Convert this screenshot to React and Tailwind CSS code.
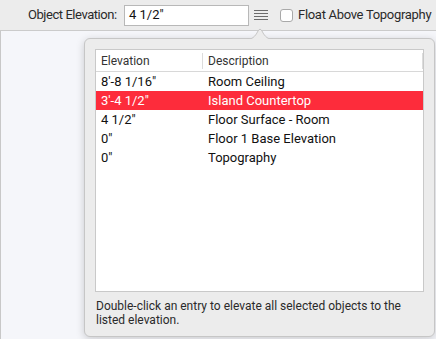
import React from "react";

const rows = [
  { elev: "8'-8 1/16\"", desc: "Room Ceiling" },
  { elev: "3'-4 1/2\"", desc: "Island Countertop", selected: true },
  { elev: "4 1/2\"", desc: "Floor Surface - Room" },
  { elev: "0\"", desc: "Floor 1 Base Elevation" },
  { elev: "0\"", desc: "Topography" },
];

function ListIcon() {
  return (
    <svg width="16" height="12" viewBox="0 0 16 12" className="text-[#6b6b6b]">
      <path d="M1 1.5h14M1 4.5h14M1 7.5h14M1 10.5h14" stroke="currentColor" strokeWidth="1" />
    </svg>
  );
}

export default function App() {
  return (
    <div
      className="relative w-[436px] h-[339px] overflow-hidden bg-[#f5f6fa] text-[13px] text-[#222]"
      style={{ fontFamily: "Roboto, 'Liberation Sans', sans-serif" }}
    >
      <div className="h-[31px] bg-[#ececec] border-b border-[#cbcbcb] flex items-center pl-[28px] whitespace-nowrap">
        <span className="shrink-0 w-[96px] text-[13px] tracking-[-0.45px] text-[#2a2a2a]">Object Elevation:</span>
        <div className="shrink-0 w-[125px] h-[21px] bg-white border border-[#b8b8b8] flex items-center pl-[4px] text-[13px] text-[#111]">
          4 1/2"
        </div>
        <div className="shrink-0 ml-[4px] w-[16px] flex items-center justify-center">
          <ListIcon />
        </div>
        <div className="shrink-0 ml-[11px] w-[13px] h-[13px] rounded-[3px] bg-white border border-[#a9a9a9]" />
        <span className="shrink-0 ml-[5px] text-[13px] tracking-[-0.3px] text-[#2a2a2a]">Float Above Topography</span>
      </div>
      <div className="absolute left-0 top-[31px] bottom-0 w-px bg-[#c8c8c8]" />

      <div className="absolute left-[84px] top-[38px] w-[351px] h-[299px] rounded-[6px] bg-[#ececec] border border-[#c6c6c6] shadow-[0_2px_8px_rgba(0,0,0,0.18)] flex flex-col px-[10px] pt-[10px]">
        <div className="h-[243px] bg-white border border-[#c9c9c9] flex flex-col">
          <div className="h-[22px] flex items-center border-b border-[#d8d8d8] text-[12px] text-[#333]">
            <div className="w-[107px] pl-[5px] h-[16px] border-r border-[#dcdcdc] flex items-center">Elevation</div>
            <div className="flex-1 pl-[5px]">Description</div>
            <div className="w-px h-[16px] bg-[#dcdcdc]" />
          </div>
          {rows.map((r, i) => (
            <div
              key={i}
              className={
                r.selected
                  ? "h-[19px] flex items-center bg-[#fd2c3b] text-white"
                  : "h-[19px] flex items-center text-[#111]"
              }
            >
              <div className="w-[107px] pl-[5px]">{r.elev}</div>
              <div className="flex-1 pl-[5px]">{r.desc}</div>
            </div>
          ))}
        </div>
        <p className="mt-[7px] text-[12px] leading-[14px] text-[#2a2a2a] pl-px whitespace-nowrap">
          Double-click an entry to elevate all selected objects to the
          <br />
          listed elevation.
        </p>
      </div>

      <svg className="absolute left-[246px] top-[27px]" width="28" height="13" viewBox="0 0 28 13">
        <path d="M0 12.5 C6 12.5 9 10 12 4 Q14 0.5 16 4 C19 10 22 12.5 28 12.5" fill="#ececec" stroke="#c6c6c6" strokeWidth="1" />
        <rect x="0" y="12" width="28" height="2" fill="#ececec" />
      </svg>
    </div>
  );
}
